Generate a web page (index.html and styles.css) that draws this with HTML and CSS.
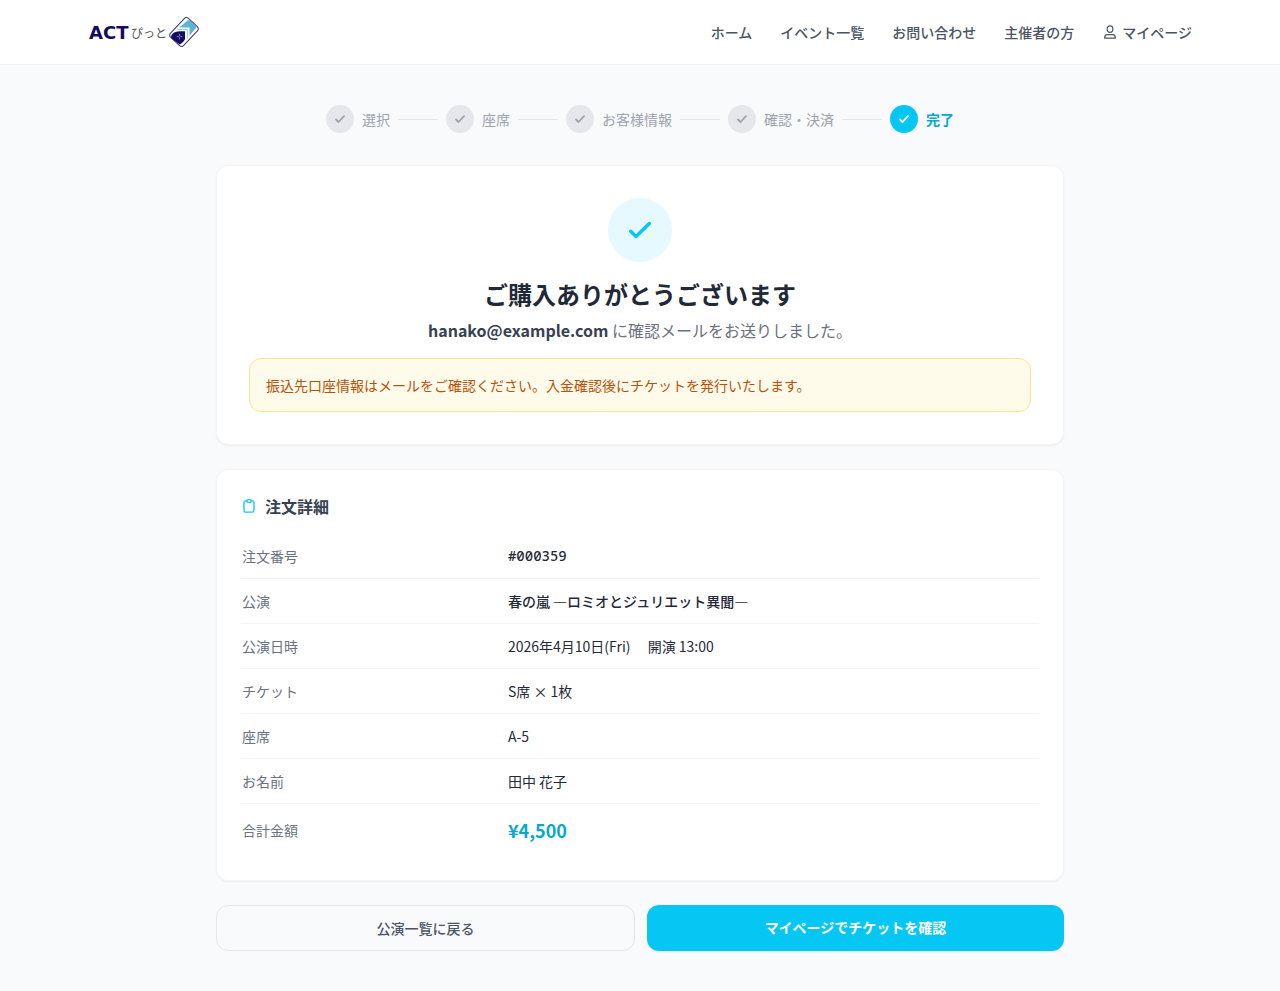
FILE: index.html
```html
<!DOCTYPE html>
<html lang="ja">
<head>
    <meta charset="UTF-8">
    <meta name="viewport" content="width=device-width, initial-scale=1.0">
    <title>ご購入ありがとうございます | ACTぴっと</title>
    <link rel="stylesheet" href="styles.css">
</head>
<body>
    <header class="header">
        <div class="header-inner">
            <a href="#" class="logo">
                <svg width="112" height="32" viewBox="0 0 112 32" role="img" aria-label="ACTぴっと">
                    <text class="logo-act" x="1" y="23">ACT</text>
                    <text class="logo-pit" x="43" y="22">ぴっと</text>
                    <rect class="logo-frame" x="87" y="3" width="18" height="26" rx="3" transform="rotate(43 96 16)"/>
                    <path class="logo-sky" d="M91.500 11.500l8-7c1-.8 1.800-.8 2.600 0l5.600 5.200c.8.800.8 1.600.2 2.400l-6.400 7.700v-8.300z"/>
                    <path class="logo-line" d="M89.500 13.400h9.800v9"/>
                    <path class="logo-navy" d="M84 18.500c2-2.800 5-3.300 13-3.300v8c-1 2-3 4-5.300 5.300l-7.700-5.700c-1.200-1.500-1.200-2.800 0-4.300z"/>
                    <path class="logo-petal" d="M91.500 18.300v1.200M91.500 21.700v1.200M89.200 20.600h1.200M92.600 20.600h1.200"/>
                </svg>
            </a>
            <nav class="nav">
                <a href="#">ホーム</a>
                <a href="#">イベント一覧</a>
                <a href="#">お問い合わせ</a>
                <a href="#">主催者の方</a>
                <a href="#" class="nav-mypage">
                    <svg class="icon-user" width="14" height="14" viewBox="0 0 14 14">
                        <rect x="5.200" y=".8" width="5.600" height="6.600" rx="2.800"/>
                        <path d="M2.700 13.200v-.7c0-1.700 1.500-2.800 3-2.800h4.600c1.500 0 3 1.100 3 2.800v.7z"/>
                    </svg>
                    マイページ
                </a>
            </nav>
        </div>
    </header>

    <main class="main">
        <ol class="steps">
            <li class="step">
                <span class="step-mark"><svg width="12" height="12" viewBox="0 0 12 12"><path d="M2 6.500l2.500 2.500L10 3.200"/></svg></span>
                選択
            </li>
            <li class="step">
                <span class="step-mark"><svg width="12" height="12" viewBox="0 0 12 12"><path d="M2 6.500l2.500 2.500L10 3.200"/></svg></span>
                座席
            </li>
            <li class="step">
                <span class="step-mark"><svg width="12" height="12" viewBox="0 0 12 12"><path d="M2 6.500l2.500 2.500L10 3.200"/></svg></span>
                お客様情報
            </li>
            <li class="step">
                <span class="step-mark"><svg width="12" height="12" viewBox="0 0 12 12"><path d="M2 6.500l2.500 2.500L10 3.200"/></svg></span>
                確認・決済
            </li>
            <li class="step step-current" aria-current="step">
                <span class="step-mark"><svg width="12" height="12" viewBox="0 0 12 12"><path d="M2 6.500l2.500 2.500L10 3.200"/></svg></span>
                完了
            </li>
        </ol>

        <section class="card card-thanks">
            <div class="thanks-mark">
                <svg width="28" height="28" viewBox="0 0 28 28"><path d="M4.700 15.200l5.300 5.300L23.300 7.500"/></svg>
            </div>
            <h1 class="thanks-title">ご購入ありがとうございます</h1>
            <p class="thanks-text"><strong>hanako@example.com</strong> に確認メールをお送りしました。</p>
            <p class="notice">振込先口座情報はメールをご確認ください。入金確認後にチケットを発行いたします。</p>
        </section>

        <section class="card card-order">
            <h2 class="order-title">
                <svg class="icon-clipboard" width="16" height="16" viewBox="0 0 16 16">
                    <path d="M5.500 2.900H4.700A1.700 1.700 0 0 0 3 4.600v7.900a1.700 1.700 0 0 0 1.700 1.700h6.600a1.700 1.700 0 0 0 1.700-1.700V4.600a1.700 1.700 0 0 0-1.700-1.700h-.8"/>
                    <rect x="5.900" y="1.700" width="4.200" height="2.600" rx="1.200"/>
                </svg>
                注文詳細
            </h2>
            <table class="order">
                <tbody>
                    <tr>
                        <th scope="row">注文番号</th>
                        <td class="order-number">#000359</td>
                    </tr>
                    <tr>
                        <th scope="row">公演</th>
                        <td class="order-show">春の嵐 ―ロミオとジュリエット異聞―</td>
                    </tr>
                    <tr>
                        <th scope="row">公演日時</th>
                        <td>2026年4月10日(Fri)　 開演 13:00</td>
                    </tr>
                    <tr>
                        <th scope="row">チケット</th>
                        <td>S席 × 1枚</td>
                    </tr>
                    <tr>
                        <th scope="row">座席</th>
                        <td>A-5</td>
                    </tr>
                    <tr>
                        <th scope="row">お名前</th>
                        <td>田中 花子</td>
                    </tr>
                    <tr>
                        <th scope="row">合計金額</th>
                        <td class="order-total">¥4,500</td>
                    </tr>
                </tbody>
            </table>
        </section>

        <div class="actions">
            <a href="#" class="btn btn-outline">公演一覧に戻る</a>
            <a href="#" class="btn btn-primary">マイページでチケットを確認</a>
        </div>
    </main>
</body>
</html>
```

FILE: styles.css
```css
* {
    box-sizing: border-box;
}
body {
    margin: 0;
    background-color: #f9fafc;
    color: #1f2937;
    font-family: "Noto Sans CJK JP", sans-serif;
    font-size: 14px;
    line-height: 20px;
}
h1, h2, p, ol {
    margin: 0;
    padding: 0;
}
a {
    color: inherit;
    text-decoration: none;
}
svg {
    display: block;
    flex-shrink: 0;
    fill: none;
    stroke: currentColor;
    stroke-linecap: round;
    stroke-linejoin: round;
}

/* header */
.header {
    background-color: #ffffff;
    border-bottom: 1px solid #f3f4f6;
}
.header-inner {
    display: flex;
    justify-content: space-between;
    align-items: center;
    max-width: 1152px;
    height: 64px;
    margin: 0 auto;
    padding: 0 24px;
}
.logo text {
    stroke: none;
}
.logo-act {
    fill: #150b62;
    font-family: "DejaVu Sans", sans-serif;
    font-size: 18px;
    font-weight: bold;
}
.logo-pit {
    fill: #555555;
    font-size: 12px;
}
.logo-frame {
    fill: #ffffff;
    stroke: #3b3478;
}
.logo-sky {
    fill: #5bb5d8;
    stroke: none;
}
.logo-line {
    stroke: #8fcde5;
}
.logo-navy {
    fill: #150b62;
    stroke: none;
}
.logo-petal {
    stroke: #8d88bd;
}
.nav {
    display: flex;
    gap: 28px;
    color: #4b5563;
    font-weight: 500;
}
.nav-mypage {
    display: flex;
    align-items: center;
    gap: 6px;
}
.icon-user {
    stroke-width: 1.2;
}

.main {
    max-width: 896px;
    margin: 0 auto;
    padding: 40px 24px;
}

/* steps */
.steps {
    display: flex;
    justify-content: center;
    gap: 8px;
    margin-bottom: 32px;
    list-style: none;
}
.step {
    display: flex;
    align-items: center;
    gap: 8px;
    color: #9ca3af;
}
.step:not(:last-child)::after {
    content: "";
    width: 40px;
    height: 1px;
    background-color: #e5e7eb;
}
.step-mark {
    display: flex;
    justify-content: center;
    align-items: center;
    width: 28px;
    height: 28px;
    border-radius: 50%;
    background-color: #e5e7eb;
}
.step-mark svg {
    stroke-width: 1.8;
}
.step-current {
    color: #06a9ce;
    font-weight: 700;
}
.step-current .step-mark {
    background-color: #06c7f4;
    color: #ffffff;
}

/* cards */
.card {
    margin-bottom: 24px;
    border: 1px solid #f3f4f6;
    border-radius: 12px;
    background-color: #ffffff;
    box-shadow: 0 1px 2px rgba(0, 0, 0, 0.05);
}
.card-thanks {
    padding: 32px;
    text-align: center;
}
.thanks-mark {
    display: flex;
    justify-content: center;
    align-items: center;
    width: 64px;
    height: 64px;
    margin: 0 auto 16px;
    border-radius: 50%;
    background-color: #e6f9fe;
    color: #06c7f4;
}
.thanks-mark svg {
    stroke-width: 3.4;
}
.thanks-title {
    margin-bottom: 8px;
    font-size: 24px;
    line-height: 32px;
}
.thanks-text {
    margin-bottom: 16px;
    color: #6b7280;
    font-size: 16px;
    line-height: 24px;
}
.thanks-text strong {
    color: #374151;
}
.notice {
    padding: 16px;
    border: 1px solid #fde68a;
    border-radius: 12px;
    background-color: #fffbeb;
    color: #b45309;
    text-align: left;
}

/* order details */
.card-order {
    padding: 24px;
}
.order-title {
    display: flex;
    align-items: center;
    gap: 8px;
    margin-bottom: 16px;
    color: #374151;
    font-size: 16px;
    line-height: 24px;
}
.icon-clipboard {
    color: #06c7f4;
    stroke-width: 1.3;
}
.order {
    width: 100%;
    table-layout: fixed;
    border-spacing: 0;
}
.order th,
.order td {
    padding: 12px 1px;
    border-bottom: 1px solid #f3f4f6;
    text-align: left;
}
.order th {
    width: 33.33%;
    color: #6b7280;
    font-weight: 400;
}
.order tr:last-child th,
.order tr:last-child td {
    border-bottom: none;
}
.order .order-number {
    font-family: "Noto Sans Mono", "DejaVu Sans Mono", monospace;
    font-weight: 500;
}
.order .order-show {
    font-weight: 500;
}
.order .order-total {
    color: #06a9ce;
    font-size: 18px;
    font-weight: 700;
    line-height: 28px;
}

/* buttons */
.actions {
    display: flex;
    gap: 12px;
}
.btn {
    flex: 1;
    padding: 12px 0;
    border-radius: 12px;
    text-align: center;
}
.btn-outline {
    border: 1px solid #e5e7eb;
    color: #4b5563;
    font-weight: 500;
}
.btn-primary {
    background-color: #06c7f4;
    box-shadow: 0 1px 2px rgba(0, 0, 0, 0.05);
    color: #ffffff;
    font-weight: 700;
}
```
